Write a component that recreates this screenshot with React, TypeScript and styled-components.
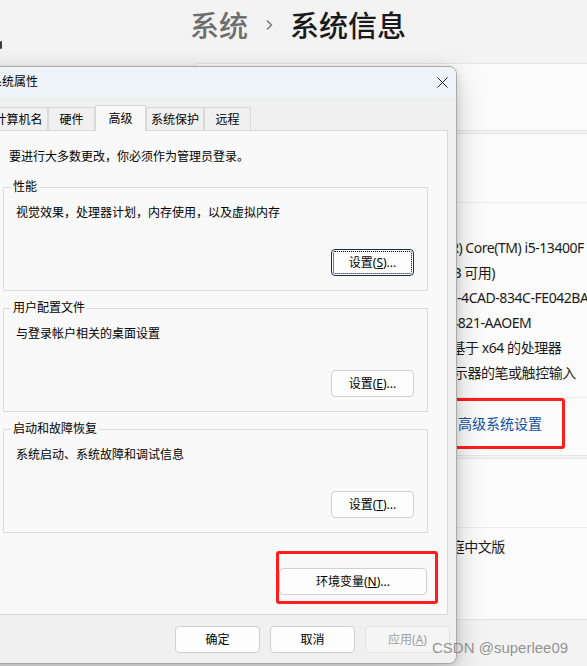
import React from "react";
import styled, { createGlobalStyle } from "styled-components";

const GlobalStyle = createGlobalStyle`
  * { box-sizing: border-box; }
  html, body { margin: 0; padding: 0; background: #f3f3f3; }
  body { font-family: "Noto Sans", "Noto Sans CJK SC", sans-serif; color: #1b1b1b; }
`;

const Screen = styled.div`
  position: relative;
  width: 587px;
  height: 666px;
  overflow: hidden;
  background: #f3f3f3;
`;

/* ---------- settings page behind the dialog ---------- */

const Header = styled.header`
  display: flex;
  align-items: flex-start;
  height: 63px;
`;

const NavMark = styled.span`
  width: 2px;
  height: 8px;
  margin-top: 41px;
  background: #3a3a3a;
  border-radius: 1px;
`;

const Breadcrumb = styled.h1`
  margin: 4px 0 0 188px;
  display: flex;
  align-items: center;
  font: 500 29px/40px "Noto Sans CJK SC", sans-serif;
  white-space: nowrap;
`;

const Crumb = styled.span<{ $current?: boolean }>`
  color: ${(p) => (p.$current ? "#1a1a1a" : "#6e6e6e")};
`;

const Chevron = styled.svg`
  width: 8px;
  height: 12px;
  margin: 2px 17px 0;
`;

const Settings = styled.main`
  margin-left: 193px;
  width: 480px;
  display: flex;
  flex-direction: column;
  gap: 2px;
  font-size: 14px;
`;

const Card = styled.section`
  background: #fbfbfb;
  border: 1px solid #e5e5e5;
  border-radius: 6px;
  overflow: hidden;
`;

const CardHeader = styled.div<{ $h: number }>`
  height: ${(p) => p.$h}px;
  display: flex;
  align-items: center;
  padding: 0 16px;
  font-size: 14px;
`;

const SpecList = styled.div<{ $top: number; $bottom: number }>`
  border-top: 1px solid #ebebeb;
  padding: ${(p) => p.$top}px 0 ${(p) => p.$bottom}px 16px;
`;

const SpecRow = styled.div`
  display: grid;
  grid-template-columns: 149px 1fr;
  height: 25px;
  line-height: 25px;
  white-space: nowrap;
  color: #1b1b1b;
`;

const SpecValue = styled.span`
  letter-spacing: -0.45px;
`;

const LinksRow = styled.div`
  border-top: 1px solid #ebebeb;
  height: 58px;
  display: flex;
  align-items: center;
  gap: 22px;
  padding: 0 0 7px 16px;
  white-space: nowrap;
`;

const Link = styled.a`
  color: #0f4fa3;
  text-decoration: none;
`;

const Highlight = styled.span<{ $w: number; $h: number; $pad: string; $shift?: number }>`
  display: inline-flex;
  align-items: center;
  width: ${(p) => p.$w}px;
  height: ${(p) => p.$h}px;
  padding: ${(p) => p.$pad};
  margin-left: ${(p) => p.$shift ?? 0}px;
  border: 3px solid #ff1d1d;
  border-radius: 3px;
`;

/* ---------- system properties dialog ---------- */

const Dialog = styled.div`
  position: absolute;
  left: -26px;
  top: 66px;
  width: 483px;
  height: 598px;
  display: flex;
  flex-direction: column;
  background: #f0f0f0;
  border: 1px solid #a9a9a9;
  border-radius: 8px;
  box-shadow: 0 10px 30px rgba(0, 0, 0, 0.2), 0 2px 8px rgba(0, 0, 0, 0.12);
  font: 12px/16px "Noto Sans", "Noto Sans CJK SC", sans-serif;
  color: #000;
  overflow: hidden;
`;

const TitleBar = styled.div`
  height: 30px;
  flex: none;
  display: flex;
  align-items: center;
  justify-content: space-between;
  padding-left: 15px;
  background: #eef4fa;
`;

const CloseButton = styled.button`
  width: 27px;
  height: 30px;
  display: flex;
  align-items: center;
  justify-content: center;
  border: none;
  background: transparent;
  padding: 0;
`;

const Body = styled.div`
  flex: 1;
  display: flex;
  flex-direction: column;
  padding-top: 8px;
`;

const Tabs = styled.div`
  display: flex;
  align-items: flex-end;
  margin-left: 14px;
  position: relative;
  z-index: 1;
`;

const Tab = styled.div<{ $w: number; $active?: boolean }>`
  width: ${(p) => p.$w}px;
  height: ${(p) => (p.$active ? 26 : 23)}px;
  margin-bottom: ${(p) => (p.$active ? -1 : 0)}px;
  display: flex;
  align-items: center;
  justify-content: center;
  padding-top: ${(p) => (p.$active ? 0 : 2)}px;
  border: 1px solid #d9d9d9;
  border-bottom: none;
  background: ${(p) => (p.$active ? "#f9f9f9" : "#f0f0f0")};
  white-space: nowrap;
`;

const Panel = styled.div`
  height: 485px;
  flex: none;
  margin: 0 8px;
  display: flex;
  flex-direction: column;
  border: 1px solid #d9d9d9;
  background: #f9f9f9;
  padding: 18px 0 27px;
`;

const Intro = styled.p`
  margin: 0 0 22px 25px;
  height: 16px;
`;

const Group = styled.fieldset<{ $gap: number }>`
  position: relative;
  margin: 0 19px ${(p) => p.$gap}px;
  height: 104px;
  padding: 17px 13px 14px 12px;
  border: 1px solid #dcdcdc;
  display: flex;
  flex-direction: column;
  min-width: 0;
`;

const GroupTitle = styled.span`
  position: absolute;
  top: -9px;
  left: 7px;
  padding: 0 2px;
  background: #f9f9f9;
  line-height: 16px;
`;

const GroupText = styled.div`
  height: 16px;
  margin-bottom: 28px;
`;

const Btn = styled.button<{ $w: number; $focus?: boolean; $disabled?: boolean }>`
  width: ${(p) => p.$w}px;
  height: 27px;
  padding: 0;
  flex: none;
  border-radius: 4px;
  border: 1px solid ${(p) => (p.$focus ? "#1f2f4a" : p.$disabled ? "#e3e3e3" : "#d0d0d0")};
  background: ${(p) => (p.$disabled ? "#f5f5f5" : "#fdfdfd")};
  color: ${(p) => (p.$disabled ? "#a0a0a0" : "#000")};
  font: 12px/16px "Noto Sans", "Noto Sans CJK SC", sans-serif;
  outline: ${(p) => (p.$focus ? "1px dotted #000" : "none")};
  outline-offset: -3px;
  align-self: flex-end;
`;

const EnvRow = styled.div`
  display: flex;
  justify-content: flex-end;
  margin: 1px 9px 0 0;
`;

const Footer = styled.div`
  display: flex;
  justify-content: flex-end;
  gap: 10px;
  padding: 11px 6px 10px 0;
`;

const Watermark = styled.div`
  position: absolute;
  left: 432px;
  top: 638px;
  font: 15px/20px "Liberation Sans", Arial, sans-serif;
  color: rgba(120, 120, 120, 0.8);
  white-space: nowrap;
`;

const specs: [string, string][] = [
  ["处理器", "13th Gen Intel(R) Core(TM) i5-13400F   2.50 GHz"],
  ["机带 RAM", "16.0 GB (15.8 GB 可用)"],
  ["设备 ID", "5A6F1B2E-77D3-4CAD-834C-FE042BA19E60"],
  ["产品 ID", "00342-31644-04821-AAOEM"],
  ["系统类型", "64 位操作系统, 基于 x64 的处理器"],
  ["笔和触控", "没有可用于此显示器的笔或触控输入"],
];

const groups = [
  { title: "性能", text: "视觉效果，处理器计划，内存使用，以及虚拟内存", key: "S", focus: true },
  { title: "用户配置文件", text: "与登录帐户相关的桌面设置", key: "E" },
  { title: "启动和故障恢复", text: "系统启动、系统故障和调试信息", key: "T" },
];

const tabs = [
  { label: "计算机名", w: 59 },
  { label: "硬件", w: 47 },
  { label: "高级", w: 51, active: true },
  { label: "系统保护", w: 58 },
  { label: "远程", w: 47 },
];

export default function App() {
  return (
    <Screen>
      <GlobalStyle />
      <Header>
        <NavMark />
        <Breadcrumb>
          <Crumb>系统</Crumb>
          <Chevron viewBox="0 0 8 12">
            <path d="M2 1.5 L6.5 6 L2 10.5" fill="none" stroke="#6e6e6e" strokeWidth="1.3" />
          </Chevron>
          <Crumb $current>系统信息</Crumb>
        </Breadcrumb>
      </Header>

      <Settings>
        <Card>
          <CardHeader $h={66}>DESKTOP-7QK2M5H</CardHeader>
        </Card>
        <Card>
          <CardHeader $h={68}>设备规格</CardHeader>
          <SpecList $top={32} $bottom={12}>
            {specs.map(([k, v]) => (
              <SpecRow key={k}>
                <span>{k}</span>
                <SpecValue>{v}</SpecValue>
              </SpecRow>
            ))}
          </SpecList>
          <LinksRow>
            <span>相关链接</span>
            <Link>域或工作组</Link>
            <Link>系统保护</Link>
            <Highlight $w={117} $h={51} $pad="0 0 0 7px" $shift={-10}>
              <Link>高级系统设置</Link>
            </Highlight>
          </LinksRow>
        </Card>
        <Card>
          <CardHeader $h={68}>Windows 规格</CardHeader>
          <SpecList $top={6} $bottom={60}>
            <SpecRow>
              <span>版本</span>
              <SpecValue>Windows 11 家庭中文版</SpecValue>
            </SpecRow>
          </SpecList>
        </Card>
      </Settings>

      <Dialog>
        <TitleBar>
          <span>系统属性</span>
          <CloseButton aria-label="关闭">
            <svg width="11" height="11" viewBox="0 0 11 11">
              <path d="M0.5 0.5 L10.5 10.5 M10.5 0.5 L0.5 10.5" stroke="#1a1a1a" strokeWidth="1" />
            </svg>
          </CloseButton>
        </TitleBar>
        <Body>
          <Tabs>
            {tabs.map((t) => (
              <Tab key={t.label} $w={t.w} $active={t.active}>
                {t.label}
              </Tab>
            ))}
          </Tabs>
          <Panel>
            <Intro>要进行大多数更改，你必须作为管理员登录。</Intro>
            {groups.map((g) => (
              <Group key={g.title} $gap={17}>
                <GroupTitle>{g.title}</GroupTitle>
                <GroupText>{g.text}</GroupText>
                <Btn $w={83} $focus={g.focus}>
                  设置(<u>{g.key}</u>)...
                </Btn>
              </Group>
            ))}
            <EnvRow>
              <Highlight $w={162} $h={53} $pad="14px 0 6px 0">
                <Btn $w={148}>
                  环境变量(<u>N</u>)...
                </Btn>
              </Highlight>
            </EnvRow>
          </Panel>
          <Footer>
            <Btn $w={85}>确定</Btn>
            <Btn $w={85}>取消</Btn>
            <Btn $w={85} $disabled>
              应用(<u>A</u>)
            </Btn>
          </Footer>
        </Body>
      </Dialog>

      <Watermark>CSDN @superlee09</Watermark>
    </Screen>
  );
}
